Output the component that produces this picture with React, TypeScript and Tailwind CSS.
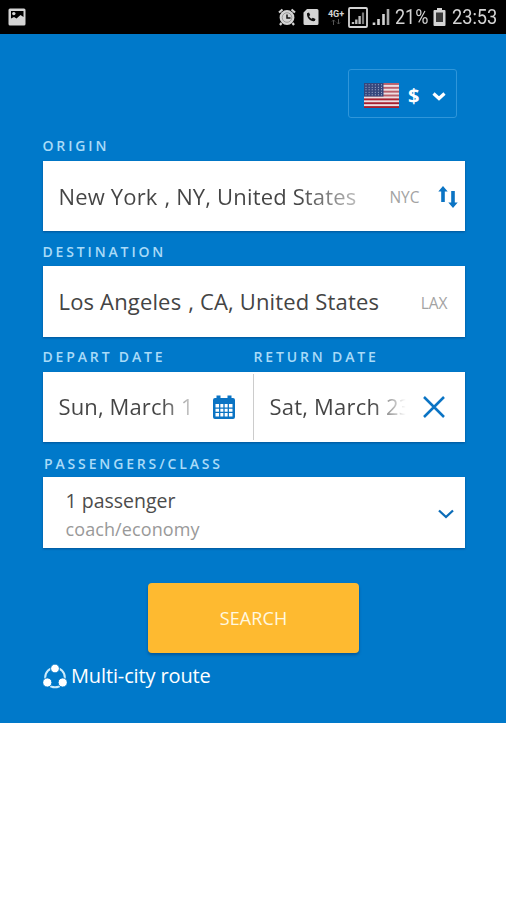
import React from 'react'

const StatusBar = () => {
  return (
    <div className="flex h-[34px] w-full items-center bg-black pl-2 pr-[8px] font-[Roboto,sans-serif] text-[#d4d4d4]">
      <svg width="18" height="18" viewBox="0 0 18 18">
        <path fillRule="evenodd" fill="#d4d4d4" d="M2 .5h14a1.500 1.500 0 0 1 1.500 1.500v14a1.500 1.500 0 0 1-1.500 1.500H2A1.500 1.500 0 0 1 .5 16V2A1.500 1.500 0 0 1 2 .5zM3 3v7.500l3-1.500 2.500 1.500 4-3.500L15.500 9V3z" />
        <circle cx="5.800" cy="5.600" r="1.700" fill="#d4d4d4" />
      </svg>
      <div className="ml-auto flex items-center">
        <svg className="mr-[7px]" width="18" height="18" viewBox="0 0 18 18">
          <circle cx="9" cy="9.500" r="7.400" fill="#d4d4d4" />
          <path d="M1 4.500 4.500 1.500M17 4.500 13.500 1.500M3.500 15 2 17M14.500 15l1.500 2" stroke="#d4d4d4" strokeWidth="2.200" />
          <circle cx="9" cy="9.500" r="4.800" fill="none" stroke="#888" strokeWidth="0.800" />
          <path d="M9 6.500V10h3.500" fill="none" stroke="#111" strokeWidth="1.500" />
        </svg>
        <svg className="mr-[8px]" width="16" height="18" viewBox="0 0 16 18">
          <path fill="#d4d4d4" d="M4 1h10a1.500 1.500 0 0 1 1.500 1.500v13A1.500 1.500 0 0 1 14 17H2A1.500 1.500 0 0 1 .5 15.500v-11z" />
          <path fill="#111" d="M4 5.200 6 4.500l1.200 2.600-1.100 1.100c.6 1.200 1.300 2 2.500 2.600l1.200-1.100 2.700 1.300-.7 2.100C7.500 14 3.500 9.800 4 5.200z" />
        </svg>
        <div className="mr-[3px] flex w-[18px] flex-col items-center pt-px leading-none">
          <span className="text-[9px] font-bold leading-[9px]">4G+</span>
          <svg width="10" height="6" viewBox="0 0 10 6" fill="none" stroke="#555">
            <path d="M2.500 6V1M1 2.500 2.500 1 4 2.500M7.500 0v5M6 3.500 7.500 5 9 3.500" />
          </svg>
        </div>
        <svg className="mr-[4px]" width="20" height="21" viewBox="0 0 20 21">
          <rect x="1" y="1" width="18" height="19" rx="1" fill="none" stroke="#d4d4d4" strokeWidth="1.800" />
          <path stroke="#bbb" strokeWidth="2.400" d="M5 17v-2M8.300 17v-4.500M11.600 17V9" />
          <path stroke="#777" strokeWidth="2.200" d="M15 17V5.500" />
        </svg>
        <svg className="mr-[5px]" width="18" height="18" viewBox="0 0 18 18" stroke="#d4d4d4" strokeWidth="2.600">
          <path d="M2 17v-2.500M6.500 17v-6M11.500 17V6" />
          <path stroke="#aaa" d="M16 17V1" />
        </svg>
        <span className="w-[35px] text-[20px]">
          <span className="inline-block origin-left scale-x-90">21%</span>
        </span>
        <svg className="ml-[3px] mr-[6px]" width="13" height="18" viewBox="0 0 13 18">
          <path fill="#d4d4d4" d="M4 0h5v2h2.500a1 1 0 0 1 1 1v14a1 1 0 0 1-1 1h-10a1 1 0 0 1-1-1V3a1 1 0 0 1 1-1H4z" />
          <path fill="#3a3a3a" d="M3 4.500h7V14H3z" />
        </svg>
        <span className="w-[46px] text-[20px]">
          <span className="inline-block origin-left scale-x-[.91]">23:53</span>
        </span>
      </div>
    </div>
  )
}

const Flag = () => {
  return (
    <svg width="35" height="25" viewBox="0 0 35 25">
      <rect width="35" height="25" fill="#ecdfe3" />
      {[0, 1, 2, 3, 4, 5, 6].map((i) => (
        <rect key={i} y={i * 3.85} width="35" height="1.92" fill={i > 3 ? '#a8202f' : '#b9606c'} />
      ))}
      <rect width="19.500" height="13.500" fill="#35477d" />
      {[0, 1, 2, 3, 4].map((row) =>
        [0, 1, 2, 3, 4, 5].map((col) => (
          <circle key={row + '-' + col} cx={2 + col * 3.1} cy={1.8 + row * 2.5} r="0.55" fill="#c3cbe0" />
        ))
      )}
    </svg>
  )
}

const Label = ({ children }: { children: React.ReactNode }) => {
  return <div className="h-[17px] whitespace-nowrap text-[14px] font-semibold leading-[16px] tracking-[2.850px] text-[#a9dbf8]">{children}</div>
}

const box = 'flex h-[70.500px] items-center bg-white shadow-[0_1px_2px_rgba(0,40,90,0.45)]'

const App = () => {
  return (
    <div className="min-h-[900px] w-[506px] overflow-hidden bg-white font-['Open_Sans',sans-serif]">
      <StatusBar />
      <div className="h-[689px] bg-[#0079ca] pl-[42.500px] pr-[41.500px] pt-[35px]">
        <div className="mr-[7.500px] ml-auto flex h-[49px] w-[109px] items-center rounded-[3px] border border-[#2f96da] pl-[15px] pt-1">
          <Flag />
          <span className="ml-[9px] text-[20px] font-bold leading-none text-white">$</span>
          <svg className="ml-[13px]" width="14" height="10" viewBox="0 0 14 10" fill="none" stroke="#fff" strokeWidth="3.200">
            <path d="m1.500 2.500 5.500 5 5.500-5" />
          </svg>
        </div>

        <div className="mt-[20px]">
          <Label>ORIGIN</Label>
          <div className={box + ' mt-[5.500px] pl-[16px] pr-[7px]'}>
            <div className="whitespace-nowrap bg-gradient-to-r from-[#444] from-80% to-[#bbb] bg-clip-text pt-[2px] text-[22px] tracking-[.16px] text-transparent">
              New York <span className="ml-px">, NY, United States</span>
            </div>
            <span className="ml-auto pt-[3px] text-[15.500px] text-[#a3a3a3]">NYC</span>
            <svg className="ml-[18px] mt-[2px]" width="20" height="24" viewBox="0 0 20 24">
              <path fill="#0b74c4" d="M5 1 9.700 6.500H6.800V17H3.200V6.500H.3zM15 23l-4.700-5.500h2.900V6h3.600v11.500h2.900z" />
            </svg>
          </div>
        </div>

        <div className="mt-[12.500px]">
          <Label>DESTINATION</Label>
          <div className={box + ' mt-[5.500px] pl-[16px] pr-[17px]'}>
            <span className="whitespace-nowrap text-[22px] tracking-[.16px] text-[#444]">
              Los Angeles <span className="ml-px">, CA, United States</span>
            </span>
            <span className="ml-auto pt-[4px] text-[15.500px] text-[#a3a3a3]">LAX</span>
          </div>
        </div>

        <div className="mt-[12.500px]">
          <div className="flex">
            <div className="w-[211px]"><Label>DEPART DATE</Label></div>
            <Label>RETURN DATE</Label>
          </div>
          <div className={box + ' mt-[5.500px]'}>
            <div className="flex h-[66px] w-[211px] items-center border-r border-[#ccc] pl-[16px] pr-[18px]">
              <div className="w-[138px] whitespace-nowrap bg-gradient-to-r from-[#444] from-74% to-[#eee] bg-clip-text text-[22px] tracking-[.12px] text-transparent">
                Sun, March 1
              </div>
              <svg className="ml-auto" width="22" height="24" viewBox="0 0 22 24">
                <path fillRule="evenodd" fill="#0b74c4" d="M3.500 3V.5h4V3h7V.5h4V3H20a2 2 0 0 1 2 2v17a2 2 0 0 1-2 2H2a2 2 0 0 1-2-2V5a2 2 0 0 1 2-2zM2.500 9v12.500h17V9z" />
                <path stroke="#0b74c4" strokeWidth="1.300" d="M2 13.200h18M2 17.300h18M6.700 9v13M11 9v13M15.300 9v13" />
              </svg>
            </div>
            <div className="flex flex-1 items-center pl-[16px]">
              <div className="w-[146px] whitespace-nowrap bg-gradient-to-r from-[#444] from-70% to-white to-93% bg-clip-text text-[22px] tracking-[.2px] text-transparent">
                Sat, March 23
              </div>
              <svg className="ml-[7.500px] shrink-0" width="22" height="22" viewBox="0 0 22 22" stroke="#0b74c4" strokeWidth="2.500">
                <path d="m1 1 20 20M21 1 1 21" />
              </svg>
            </div>
          </div>
        </div>

        <div className="mt-[12.500px]">
          <div className="-mb-px pl-[1.500px] pt-px"><Label>PASSENGERS/CLASS</Label></div>
          <div className={box + ' mt-[5.500px] pl-[23px] pr-[11px]'}>
            <div className="flex flex-col pt-[6px]">
              <span className="text-[19.500px] leading-[28px] text-[#4c4c4c]">1 passenger</span>
              <span className="text-[18px] leading-[28px] tracking-[.1px] text-[#999]">coach/economy</span>
            </div>
            <svg className="ml-auto mt-[3px]" width="16" height="10" viewBox="0 0 16 10" fill="none" stroke="#0b6cb8" strokeWidth="2.300">
              <path d="m1 1.500 7 6.500 7-6.500" />
            </svg>
          </div>
        </div>

        <button className="mx-auto mt-[35px] block h-[70.500px] w-[211px] rounded-[4px] bg-[#feba30] pt-px text-[18px] tracking-[.1px] text-[#fff8e0] shadow-[0_2px_3px_rgba(0,40,90,0.4)]">
          SEARCH
        </button>

        <div className="mt-[9px] flex h-7 items-center">
          <svg width="24" height="25" viewBox="0 0 24 25">
            <circle cx="12" cy="13.500" r="9.800" fill="none" stroke="#cdebfb" strokeWidth="2" />
            <g fill="#fff" stroke="#0079ca" strokeWidth="1">
              <circle cx="12" cy="4.500" r="4.400" />
              <circle cx="4.300" cy="18.500" r="4.600" />
              <circle cx="19.700" cy="18.500" r="4.600" />
            </g>
          </svg>
          <span className="ml-[4.500px] whitespace-nowrap text-[20px] tracking-[-.13px] text-white">Multi-city route</span>
        </div>
      </div>
    </div>
  )
}

export default App
